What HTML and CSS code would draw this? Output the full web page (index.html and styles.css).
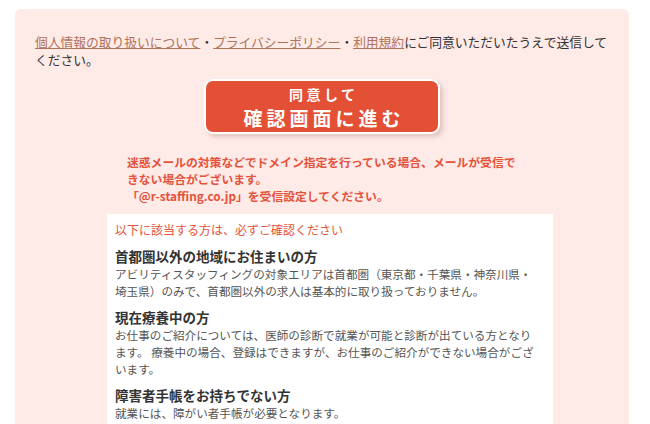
FILE: index.html
```html
<!DOCTYPE html>
<html lang="ja">
<head>
<meta charset="utf-8">
<link rel="stylesheet" href="styles.css">
</head>
<body>
<div class="panel">
  <p class="agree"><a href="#">個人情報の取り扱いについて</a>・<a href="#">プライバシーポリシー</a>・<a href="#">利用規約</a>にご同意いただいたうえで送信してください。</p>
  <div class="btn-wrap">
    <button class="submit"><span class="l1">同意して</span><span class="l2">確認画面に進む</span></button>
  </div>
  <p class="note">迷惑メールの対策などでドメイン指定を行っている場合、メールが受信できない場合がございます。<br>「@r-staffing.co.jp」を受信設定してください。</p>
  <div class="box">
    <p class="box-title">以下に該当する方は、必ずご確認ください</p>
    <div class="item">
      <h3>首都圏以外の地域にお住まいの方</h3>
      <p>アビリティスタッフィングの対象エリアは首都圏（東京都・千葉県・神奈川県・埼玉県）のみで、首都圏以外の求人は基本的に取り扱っておりません。</p>
    </div>
    <div class="item">
      <h3>現在療養中の方</h3>
      <p>お仕事のご紹介については、医師の診断で就業が可能と診断が出ている方となります。 療養中の場合、登録はできますが、お仕事のご紹介ができない場合がございます。</p>
    </div>
    <div class="item">
      <h3>障害者手帳をお持ちでない方</h3>
      <p>就業には、障がい者手帳が必要となります。</p>
    </div>
  </div>
</div>
</body>
</html>
```
FILE: styles.css
```css
html, body {
  margin: 0;
  padding: 0;
  background: #ffffff;
}
body {
  font-family: "Noto Sans CJK JP", "Noto Sans", sans-serif;
  color: #333333;
  overflow: hidden;
  height: 424px;
}
.panel {
  margin: 9px 0 0 15px;
  width: 614px;
  box-sizing: border-box;
  padding: 24px 20px 20px 20px;
  background: #feeae7;
  border-radius: 6px;
  min-height: 500px;
}
.agree {
  margin: 0;
  font-size: 12.75px;
  line-height: 18px;
  color: #333333;
}
.agree a {
  color: #b0735c;
  text-decoration: underline;
}
.btn-wrap {
  display: flex;
  justify-content: center;
  margin-top: 10px;
}
.submit {
  width: 236px;
  height: 55px;
  box-sizing: border-box;
  border: 2px solid #ffffff;
  border-radius: 9px;
  background: #e45036;
  box-shadow: 3px 3px 4px rgba(180, 130, 120, 0.35);
  color: #ffffff;
  font-family: "Noto Sans CJK JP", sans-serif;
  font-weight: bold;
  display: flex;
  flex-direction: column;
  align-items: center;
  justify-content: center;
  padding: 2px 0 0 0;
  cursor: pointer;
}
.submit .l1 {
  font-size: 14px;
  letter-spacing: 3.5px;
  line-height: 21px;
  margin-right: -3.5px;
}
.submit .l2 {
  font-size: 19px;
  letter-spacing: 4px;
  line-height: 26px;
  margin-right: -4px;
}
.note {
  margin: 19px 0 0 92px;
  width: 400px;
  font-size: 11.8px;
  line-height: 17px;
  font-weight: bold;
  color: #e4533b;
}
.box {
  margin: 10px 0 0 72px;
  width: 446px;
  box-sizing: border-box;
  background: #ffffff;
  padding: 7px 14px 10px 8px;
}
.box-title {
  margin: 0;
  font-size: 12px;
  line-height: 18px;
  color: #e4533b;
}
.item {
  margin-top: 8px;
}
.item h3 {
  margin: 0;
  font-size: 13.5px;
  line-height: 19px;
  font-weight: bold;
  color: #333333;
}
.item p {
  margin: 0;
  font-size: 11.6px;
  line-height: 17px;
  color: #555555;
}
```
